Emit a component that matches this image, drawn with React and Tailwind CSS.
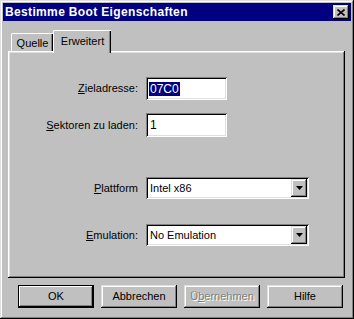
const raised =
  'shadow-[inset_-1px_-1px_0_#000,inset_1px_1px_0_#dfdfdf,inset_-2px_-2px_0_#808080,inset_2px_2px_0_#fff]';
const sunken =
  'shadow-[inset_1px_1px_0_#808080,inset_-1px_-1px_0_#fff,inset_2px_2px_0_#000,inset_-2px_-2px_0_#dfdfdf]';

function Feld({ children, breite = 'w-[81px]', hoehe = 'h-[23px]' }) {
  return (
    <div className={`${breite} ${hoehe} bg-white ${sunken} flex items-center pl-[3px]`}>
      {children}
    </div>
  );
}

function Auswahl({ wert }) {
  return (
    <div className={`w-[163px] h-[22px] bg-white ${sunken} flex items-center pl-[4px] pr-[2px]`}>
      <span className="flex-1">{wert}</span>
      <div className={`w-[16px] h-[18px] bg-[#c0c0c0] ${raised} flex items-center justify-center`}>
        <svg width="7" height="4" viewBox="0 0 7 4">
          <path d="M0 0h7L3.5 4z" fill="#000" />
        </svg>
      </div>
    </div>
  );
}

function Zeile({ label, children, className = '' }) {
  return (
    <div className={`flex items-center gap-[8px] ${className}`}>
      <div className="w-[130px] text-right">{label}</div>
      {children}
    </div>
  );
}

function Knopf({ children, standard, deaktiviert }) {
  return (
    <div
      className={`w-[76px] h-[23px] flex items-center justify-center bg-[#c0c0c0] ${
        standard
          ? 'border border-black shadow-[inset_-1px_-1px_0_#000,inset_1px_1px_0_#fff,inset_-2px_-2px_0_#808080]'
          : raised
      } ${deaktiviert ? 'text-[#808080] [text-shadow:1px_1px_0_#fff]' : 'text-black'}`}
    >
      {children}
    </div>
  );
}

export default function App() {
  return (
    <div
      className={`w-[354px] h-[319px] bg-[#c0c0c0] p-[3px] ${raised} font-['Liberation_Sans',Arial,sans-serif] text-[11px] text-black leading-none`}
    >
      <div className="h-[18px] bg-[#000080] flex items-center justify-between pl-[2px] pr-[2px]">
        <span className="text-white font-bold text-[12px] tracking-[0.35px]">
          Bestimme Boot Eigenschaften
        </span>
        <div className={`w-[16px] h-[14px] bg-[#c0c0c0] ${raised} flex items-center justify-center`}>
          <svg width="8" height="7" viewBox="0 0 8 7">
            <path d="M0.5 0.5L7.5 6.5M7.5 0.5L0.5 6.5" stroke="#000" strokeWidth="1.6" />
          </svg>
        </div>
      </div>

      <div className="ml-[5px] mt-[9px] w-[337px]">
        <div className="flex items-end h-[21px] pl-[3px]">
          <div className="w-[42px] h-[18px] border-t border-l border-white rounded-tl-[2px] shadow-[inset_-1px_0_0_#000,inset_-2px_0_0_#808080] flex items-center justify-center pt-[1px]">
            Quelle
          </div>
          <div className="relative z-10 -mb-[2px] w-[58px] h-[23px] bg-[#c0c0c0] border-t border-l border-white rounded-tl-[2px] shadow-[inset_-1px_0_0_#000,inset_-2px_0_0_#808080] flex justify-center pt-[5px]">
            Erweitert
          </div>
        </div>
        <div
          className={`h-[227px] shadow-[inset_-1px_-1px_0_#000,inset_1px_1px_0_#fff,inset_-2px_-2px_0_#808080,inset_2px_2px_0_#dfdfdf] pt-[26px]`}
        >
          <Zeile
            label={
              <>
                <u>Z</u>ieladresse:
              </>
            }
          >
            <Feld>
              <span className="bg-[#000080] text-white text-[12px] leading-[14px] px-[1px]">07C0</span>
            </Feld>
          </Zeile>
          <Zeile
            className="mt-[13px]"
            label={
              <>
                <u>S</u>ektoren zu laden:
              </>
            }
          >
            <Feld hoehe="h-[24px]">
              <span className="text-[12px] pl-[1px]">1</span>
            </Feld>
          </Zeile>
          <Zeile
            className="mt-[40px]"
            label={
              <>
                <u>P</u>lattform
              </>
            }
          >
            <Auswahl wert="Intel x86" />
          </Zeile>
          <Zeile
            className="mt-[25px]"
            label={
              <>
                <u>E</u>mulation:
              </>
            }
          >
            <Auswahl wert="No Emulation" />
          </Zeile>
        </div>
      </div>

      <div className="flex gap-[7px] ml-[15px] mt-[7px]">
        <Knopf standard>OK</Knopf>
        <Knopf>Abbrechen</Knopf>
        <Knopf deaktiviert>
          <span>
            Ü<u>b</u>ernehmen
          </span>
        </Knopf>
        <Knopf>Hilfe</Knopf>
      </div>
    </div>
  );
}
